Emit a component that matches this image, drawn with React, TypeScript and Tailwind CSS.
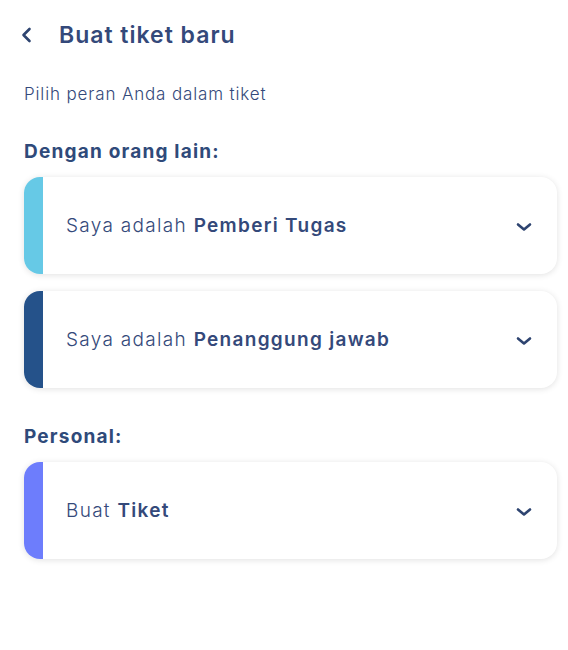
import React from "react";

function Chevron() {
  return (
    <svg width="18" height="18" viewBox="0 0 18 18" fill="none">
      <path d="M3 6.5L9 11.5L15 6.5" stroke="#2e4470" strokeWidth="2.6" strokeLinecap="round" strokeLinejoin="round" />
    </svg>
  );
}

function Card({ color, pre, bold }: { color: string; pre: string; bold: string }) {
  return (
    <div className="flex w-[533px] h-[97px] rounded-[16px] bg-white shadow-[0_1px_6px_rgba(0,0,0,0.12)] overflow-hidden">
      <div className="w-[19px] shrink-0" style={{ backgroundColor: color }} />
      <div className="flex flex-1 items-center justify-between pl-[23px] pr-[24px] pt-[2px]">
        <span className="text-[19px] text-[#34497a] tracking-[1.3px]">
          <span className="font-light">{pre} </span>
          <span className="font-semibold">{bold}</span>
        </span>
        <Chevron />
      </div>
    </div>
  );
}

export default function App() {
  return (
    <div className="w-[568px] h-[650px] bg-white px-[24px] pt-[22px]" style={{ fontFamily: "Inter, 'Open Sans', sans-serif" }}>
      <div className="flex items-center h-[26px]">
        <svg width="14" height="18" viewBox="0 0 14 18" fill="none" className="-ml-[4px]">
          <path d="M9.5 3L3.5 9L9.5 15" stroke="#2e4470" strokeWidth="2.6" strokeLinecap="round" strokeLinejoin="round" />
        </svg>
        <h1 className="ml-[25px] text-[23px] font-semibold text-[#34497a] tracking-[1px]">Buat tiket baru</h1>
      </div>
      <p className="mt-[36px] text-[17px] font-light text-[#34497a] leading-[20px] tracking-[0.85px]">Pilih peran Anda dalam tiket</p>
      <h2 className="mt-[37px] text-[19px] font-bold text-[#2f4a7a] leading-[22px] tracking-[1.2px]">Dengan orang lain:</h2>
      <div className="mt-[14px] flex flex-col gap-[17px]">
        <Card color="#66c9e6" pre="Saya adalah" bold="Pemberi Tugas" />
        <Card color="#25528a" pre="Saya adalah" bold="Penanggung jawab" />
      </div>
      <h2 className="mt-[38px] text-[19px] font-bold text-[#2f4a7a] leading-[22px] tracking-[1.2px]">Personal:</h2>
      <div className="mt-[14px]">
        <Card color="#6d7dfc" pre="Buat" bold="Tiket" />
      </div>
    </div>
  );
}
